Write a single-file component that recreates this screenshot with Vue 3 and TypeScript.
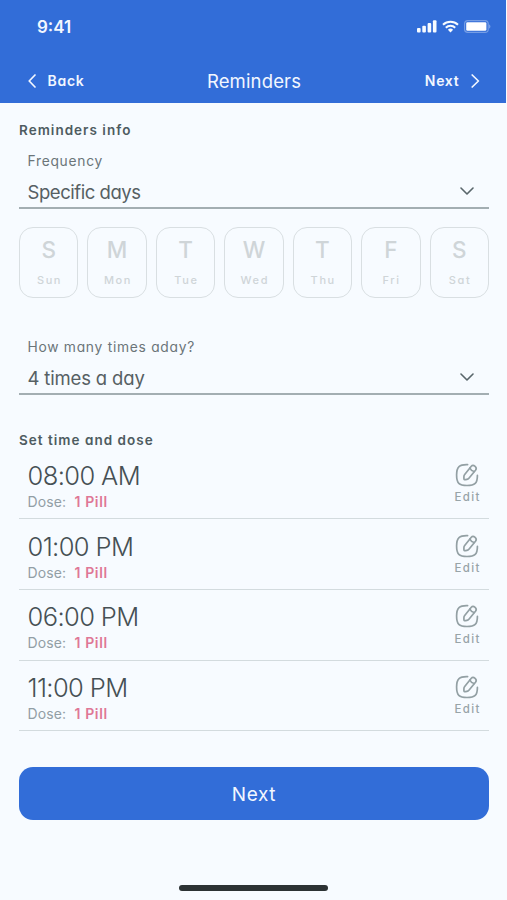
<script setup lang="ts">
interface Day { letter: string; name: string }
interface Dose { time: string; amount: string }

const days: Day[] = [
  { letter: 'S', name: 'Sun' },
  { letter: 'M', name: 'Mon' },
  { letter: 'T', name: 'Tue' },
  { letter: 'W', name: 'Wed' },
  { letter: 'T', name: 'Thu' },
  { letter: 'F', name: 'Fri' },
  { letter: 'S', name: 'Sat' },
]

const doses: Dose[] = [
  { time: '08:00 AM', amount: '1 Pill' },
  { time: '01:00 PM', amount: '1 Pill' },
  { time: '06:00 PM', amount: '1 Pill' },
  { time: '11:00 PM', amount: '1 Pill' },
]
</script>

<template>
  <div class="screen">
    <header class="header">
      <div class="status">
        <span class="clock">9:41</span>
        <div class="indicators">
          <svg width="20" height="13" viewBox="0 0 20 13" fill="#f7fbff">
            <rect x="0" y="8" width="3.6" height="4.4" rx="1" />
            <rect x="5.3" y="5.7" width="3.6" height="6.7" rx="1" />
            <rect x="10.6" y="3" width="3.6" height="9.4" rx="1" />
            <rect x="15.9" y="0.2" width="3.6" height="12.2" rx="1" />
          </svg>
          <svg width="17" height="13" viewBox="0 0 17 13" fill="none" stroke="#f7fbff" stroke-width="2">
            <path d="M1 4.7a10.8 10.8 0 0 1 15 0" />
            <path d="M3.8 7.7a6.8 6.8 0 0 1 9.4 0" />
            <path d="M8.5 12.4L5.9 9.7a3.8 3.8 0 0 1 5.2 0z" fill="#f7fbff" stroke="none" />
          </svg>
          <svg width="27" height="13" viewBox="0 0 27 13">
            <rect x="0.6" y="0.6" width="23.6" height="11.8" rx="3.2" fill="none" stroke="#f7fbff" stroke-opacity="0.34" stroke-width="1.2" />
            <rect x="2.2" y="2.3" width="20.2" height="8.4" rx="1.3" fill="#fff" />
            <path d="M25.2 4.3v4.4c1.6-.7 1.6-3.7 0-4.4z" fill="#f7fbff" fill-opacity="0.42" />
          </svg>
        </div>
      </div>
      <nav class="nav">
        <div class="nav-side back">
          <svg width="8" height="14" viewBox="0 0 8 14"><path d="M7 1L1.2 7 7 13" /></svg>
          <span>Back</span>
        </div>
        <h1 class="title">Reminders</h1>
        <div class="nav-side next">
          <span>Next</span>
          <svg width="9" height="14" viewBox="0 0 9 14"><path d="M1.2 1L7.4 7 1.2 13" /></svg>
        </div>
      </nav>
    </header>

    <main class="content">
      <h2 class="section info">Reminders info</h2>
      <div class="field">
        <label class="label">Frequency</label>
        <div class="select">
          <span class="specific">Specific days</span>
          <svg class="chevron" width="14" height="8" viewBox="0 0 14 8"><path d="M1 1l6 6 6-6" /></svg>
        </div>
      </div>

      <div class="days">
        <div v-for="day in days" :key="day.name" class="day">
          <span class="letter">{{ day.letter }}</span>
          <span class="name">{{ day.name }}</span>
        </div>
      </div>

      <div class="field">
        <label class="label">How many times aday?</label>
        <div class="select">
          <span class="count">4 times a day</span>
          <svg class="chevron" width="14" height="8" viewBox="0 0 14 8"><path d="M1 1l6 6 6-6" /></svg>
        </div>
      </div>

      <h2 class="section doses-title">Set time and dose</h2>
      <div class="doses">
        <div v-for="dose in doses" :key="dose.time" class="dose">
          <div class="dose-info">
            <span class="time">{{ dose.time }}</span>
            <div class="amount"><span class="dose-label">Dose:</span><span class="pill">{{ dose.amount }}</span></div>
          </div>
          <div class="edit">
            <svg width="24" height="24" viewBox="0 0 24 24">
              <path d="M12.6 1.6C4.4 1.3 1.6 3.6 1.6 12c0 8.2 2.4 10.5 10.4 10.5S22.4 20.2 22.4 12.4" />
              <path d="M16.3 3.2L9.7 11.5c-.6.8-.8 1.3-.8 2.2v1.7c0 1 .6 1.5 1.5 1.3l1.5-.3c.9-.2 1.4-.5 2-1.2l6.6-8c1-1.3 1.1-2.6-.4-3.9s-2.8-1.3-3.8-.1z" />
              <path d="M14.9 5c.7 1.8 2.2 3.1 4.2 3.5" />
            </svg>
            <span>Edit</span>
          </div>
        </div>
      </div>

      <button class="cta" type="button">Next</button>
    </main>

    <footer class="home"><div class="home-bar"></div></footer>
  </div>
</template>

<style>
body {
  background: #f7fbff;
}
</style>

<style scoped>
.screen {
  box-sizing: border-box;
  width: 507px;
  height: 900px;
  overflow: hidden;
  display: flex;
  flex-direction: column;
  background: #f7fbff;
  font-family: Inter, "Liberation Sans", sans-serif;
  font-feature-settings: "cv11";
  color: #4b5558;
}
.screen svg {
  display: block;
  flex: none;
}
.header {
  width: 506px;
  height: 102.5px;
  background: #326dd8;
  color: #f2f7ff;
  flex: none;
}
.status {
  height: 53px;
  padding: 0 15px 0 37px;
  display: flex;
  align-items: center;
  justify-content: space-between;
}
.clock {
  font-size: 17px;
  font-weight: 600;
}
.indicators {
  display: flex;
  gap: 5px;
}
.nav {
  height: 28px;
  margin-top: 14px;
  padding: 0 26px 0 28px;
  display: grid;
  grid-template-columns: 1fr auto 1fr;
  align-items: center;
}
.nav-side {
  display: flex;
  align-items: center;
  font-size: 14px;
  font-weight: 600;
  letter-spacing: 0.75px;
}
.nav-side span {
  margin-top: -1px;
}
.nav-side svg {
  fill: none;
  stroke: #f2f7ff;
  stroke-width: 1.7;
  stroke-linecap: round;
  stroke-linejoin: round;
}
.back {
  gap: 11.5px;
}
.next {
  justify-content: flex-end;
  gap: 11.5px;
}
.title {
  margin: 0;
  font-size: 18.5px;
  font-weight: 400;
  letter-spacing: 0.15px;
}
.content {
  padding: 0 18px 0 19px;
  display: flex;
  flex-direction: column;
}
.section {
  margin: 0;
  height: 20px;
  line-height: 20px;
  font-size: 13.5px;
  font-weight: 600;
  color: #4e5c61;
}
.info {
  margin-top: 17px;
  letter-spacing: 1.02px;
}
.field {
  height: 90px;
  box-sizing: border-box;
  border-bottom: 2px solid #a3aeb2;
  padding: 0 15px 0 8.5px;
  display: flex;
  flex-direction: column;
  justify-content: flex-end;
}
.info + .field {
  height: 69.8px;
}
.label {
  height: 20px;
  line-height: 20px;
  font-size: 13.8px;
  letter-spacing: 0.73px;
  color: #6b7579;
}
.select {
  height: 36.5px;
  padding-top: 5px;
  box-sizing: border-box;
  display: flex;
  align-items: center;
  justify-content: space-between;
  font-size: 18.5px;
  color: #566063;
}
.specific {
  letter-spacing: -0.45px;
}
.count {
  letter-spacing: -0.16px;
}
.chevron {
  margin-top: -1px;
  fill: none;
  stroke: #59666b;
  stroke-width: 1.6;
  stroke-linecap: round;
  stroke-linejoin: round;
}
.days {
  margin-top: 17.5px;
  display: grid;
  grid-template-columns: repeat(7, 1fr);
  gap: 9px;
}
.day {
  box-sizing: border-box;
  height: 71px;
  border: 1.4px solid #d9dfe2;
  border-radius: 14px;
  display: flex;
  flex-direction: column;
  align-items: center;
  color: #cfd5d8;
}
.letter {
  margin-top: 8px;
  height: 28px;
  line-height: 28px;
  font-size: 22.5px;
  font-weight: 450;
}
.name {
  margin-top: 6.5px;
  height: 20px;
  line-height: 20px;
  font-size: 11px;
  font-weight: 500;
  letter-spacing: 1.6px;
  margin-right: -1.6px;
}
.days + .field {
  margin-top: 7.7px;
}
.doses-title {
  margin-top: 34.5px;
  letter-spacing: 1.02px;
}
.doses {
  margin-top: -1.4px;
}
.dose {
  box-sizing: border-box;
  height: 70.7px;
  border-bottom: 1.4px solid #d3dbde;
  padding: 9.3px 9.5px 0 8.5px;
  display: flex;
  justify-content: space-between;
}
.dose-info {
  display: flex;
  flex-direction: column;
}
.time {
  height: 36px;
  line-height: 36px;
  font-size: 25.5px;
  font-weight: 300;
  letter-spacing: -0.6px;
  color: #465054;
}
.amount {
  height: 17px;
  line-height: 16px;
  font-size: 14px;
  display: flex;
  gap: 8.5px;
}
.dose-label {
  letter-spacing: 0.1px;
  color: #929ea5;
}
.pill {
  font-weight: 600;
  letter-spacing: 0.6px;
  color: #df7796;
}
.edit {
  display: flex;
  flex-direction: column;
  align-items: center;
  color: #98a4a8;
  font-size: 11.5px;
  font-weight: 500;
  line-height: 16px;
}
.edit svg {
  margin-top: 5px;
  fill: none;
  stroke: #93a0a4;
  stroke-width: 1.7;
  stroke-linecap: round;
  stroke-linejoin: round;
}
.edit span {
  margin-top: 2.5px;
  letter-spacing: 1.4px;
  margin-right: -1.4px;
}
.cta {
  margin: 35.8px 0 0;
  height: 53px;
  padding: 1px 0 0;
  border: 0;
  border-radius: 14px;
  background: #326dd8;
  color: #f2f7ff;
  font: 400 19px Inter, "Liberation Sans", sans-serif;
  letter-spacing: 0.6px;
}
.home {
  margin-top: auto;
  height: 15px;
  flex: none;
}
.home-bar {
  width: 149px;
  height: 6px;
  margin: 0 auto;
  border-radius: 3px;
  background: #2c3234;
}
</style>
